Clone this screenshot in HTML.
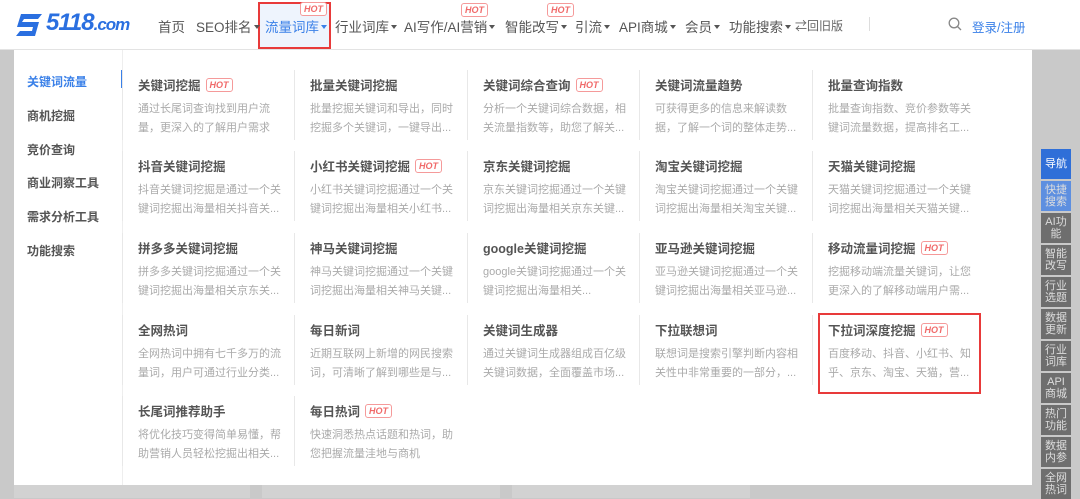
<!DOCTYPE html><html><head><meta charset="utf-8"><style>
*{margin:0;padding:0;box-sizing:border-box}
body{width:1080px;height:498px;overflow:hidden;background:#c9c9c9;font-family:"Liberation Sans","Noto Sans CJK SC",sans-serif;position:relative}
.hdr{position:absolute;left:0;top:0;width:1080px;height:50px;background:#fff;border-bottom:1px solid #e3e3e3}
.nav{position:absolute;top:16px;font-size:13.5px;color:#555;white-space:nowrap}
.nav span{position:absolute}
.nav span i{display:inline-block;width:0;height:0;border-left:3px solid transparent;border-right:3px solid transparent;border-top:4px solid currentColor;vertical-align:3px;margin-left:2px}
.hot{display:inline-block;border:1px solid #f59a9a;color:#f06a6a;font-size:9px;font-style:italic;font-weight:bold;padding:0 3px;line-height:12px;border-radius:3px;vertical-align:2px;margin-left:5px;background:#fff}
.panel{position:absolute;left:14px;top:50px;width:1018px;height:435px;background:#fff}
.ln{position:absolute;left:13px;font-size:12px;font-weight:bold;color:#555}
.it{position:absolute;width:172px;height:82px;padding-left:16px}
.it:before{content:"";position:absolute;left:0;top:-6px;height:70px;border-left:1px solid #e8e8e8}
.t{font-size:12.5px;font-weight:bold;color:#555;height:20px;line-height:20px;white-space:nowrap}
.d{font-size:11px;color:#aaa;line-height:19px;margin-top:4px;width:150px;height:38px;overflow:hidden}
.sb{position:absolute;left:1041px;width:30px;background:#6e6e6e;color:#ddd;font-size:11px;line-height:12px;text-align:center;display:flex;align-items:center;justify-content:center}
</style></head><body>
<div class="hdr">
<svg style="position:absolute;left:14px;top:13px" width="30" height="24" viewBox="0 0 30 24"><path d="M7 1h21l-4 5H10l-2 3h17l-4 14H2l4-5h12l1-4H3z" fill="#2a6fe0"/></svg>
<div style="position:absolute;left:46px;top:9px;font-size:24px;font-weight:bold;font-style:italic;color:#2a6fe0;letter-spacing:-1px">5118<span style="font-size:17px">.com</span></div>
<div style="position:absolute;left:258px;top:2px;width:73px;height:47px;background:#eef4fd;border:2px solid #e83a3a"></div>
<div class="nav">
<span style="left:158px">首页</span>
<span style="left:196px">SEO排名<i></i></span>
<span style="left:265px;color:#3a80e8">流量词库<i></i></span>
<span style="left:335px">行业词库<i></i></span>
<span style="left:404px">AI写作/AI营销<i></i></span>
<span style="left:505px">智能改写<i></i></span>
<span style="left:575px">引流<i></i></span>
<span style="left:619px">API商城<i></i></span>
<span style="left:685px">会员<i></i></span>
<span style="left:729px">功能搜索<i></i></span>
<span style="left:795px;font-size:12px;top:1px;color:#666">⇄回旧版</span>
<span style="left:972px;color:#3a80e8;font-size:12.5px;top:1px">登录/注册</span>
</div>
<span class="hot" style="position:absolute;left:300px;top:2px;margin:0">HOT</span>
<span class="hot" style="position:absolute;left:461px;top:3px;margin:0">HOT</span>
<span class="hot" style="position:absolute;left:547px;top:3px;margin:0">HOT</span>
<div style="position:absolute;left:869px;top:17px;width:1px;height:14px;background:#ddd"></div>
<svg style="position:absolute;left:948px;top:17px" width="14" height="14" viewBox="0 0 14 14"><circle cx="6" cy="6" r="4.8" fill="none" stroke="#888" stroke-width="1.3"/><path d="M9.5 9.5L13 13" stroke="#888" stroke-width="1.3"/></svg>
</div>
<div class="panel">
<div class="ln" style="top:23px;color:#3a80e8">关键词流量</div>
<div class="ln" style="top:57px">商机挖掘</div>
<div class="ln" style="top:91px">竞价查询</div>
<div class="ln" style="top:124px">商业洞察工具</div>
<div class="ln" style="top:158px">需求分析工具</div>
<div class="ln" style="top:192px">功能搜索</div>
<div style="position:absolute;left:107px;top:20px;width:2px;height:18px;background:#3a80e8"></div>
<div style="position:absolute;left:108px;top:0;height:435px;border-left:1px solid #eee"></div>

<div class="it" style="left:108px;top:26px"><div class="t">关键词挖掘<span class="hot">HOT</span></div><div class="d">通过长尾词查询找到用户流量，更深入的了解用户需求</div></div>
<div class="it" style="left:280px;top:26px"><div class="t">批量关键词挖掘</div><div class="d">批量挖掘关键词和导出，同时挖掘多个关键词，一键导出...</div></div>
<div class="it" style="left:453px;top:26px"><div class="t">关键词综合查询<span class="hot">HOT</span></div><div class="d">分析一个关键词综合数据，相关流量指数等，助您了解关...</div></div>
<div class="it" style="left:625px;top:26px"><div class="t">关键词流量趋势</div><div class="d">可获得更多的信息来解读数据，了解一个词的整体走势...</div></div>
<div class="it" style="left:798px;top:26px"><div class="t">批量查询指数</div><div class="d">批量查询指数、竞价参数等关键词流量数据，提高排名工...</div></div>

<div class="it" style="left:108px;top:107px"><div class="t">抖音关键词挖掘</div><div class="d">抖音关键词挖掘是通过一个关键词挖掘出海量相关抖音关...</div></div>
<div class="it" style="left:280px;top:107px"><div class="t">小红书关键词挖掘<span class="hot">HOT</span></div><div class="d">小红书关键词挖掘通过一个关键词挖掘出海量相关小红书...</div></div>
<div class="it" style="left:453px;top:107px"><div class="t">京东关键词挖掘</div><div class="d">京东关键词挖掘通过一个关键词挖掘出海量相关京东关键...</div></div>
<div class="it" style="left:625px;top:107px"><div class="t">淘宝关键词挖掘</div><div class="d">淘宝关键词挖掘通过一个关键词挖掘出海量相关淘宝关键...</div></div>
<div class="it" style="left:798px;top:107px"><div class="t">天猫关键词挖掘</div><div class="d">天猫关键词挖掘通过一个关键词挖掘出海量相关天猫关键...</div></div>

<div class="it" style="left:108px;top:189px"><div class="t">拼多多关键词挖掘</div><div class="d">拼多多关键词挖掘通过一个关键词挖掘出海量相关京东关...</div></div>
<div class="it" style="left:280px;top:189px"><div class="t">神马关键词挖掘</div><div class="d">神马关键词挖掘通过一个关键词挖掘出海量相关神马关键...</div></div>
<div class="it" style="left:453px;top:189px"><div class="t">google关键词挖掘</div><div class="d">google关键词挖掘通过一个关键词挖掘出海量相关...</div></div>
<div class="it" style="left:625px;top:189px"><div class="t">亚马逊关键词挖掘</div><div class="d">亚马逊关键词挖掘通过一个关键词挖掘出海量相关亚马逊...</div></div>
<div class="it" style="left:798px;top:189px"><div class="t">移动流量词挖掘<span class="hot">HOT</span></div><div class="d">挖掘移动端流量关键词，让您更深入的了解移动端用户需...</div></div>

<div class="it" style="left:108px;top:271px"><div class="t">全网热词</div><div class="d">全网热词中拥有七千多万的流量词，用户可通过行业分类...</div></div>
<div class="it" style="left:280px;top:271px"><div class="t">每日新词</div><div class="d">近期互联网上新增的网民搜索词，可清晰了解到哪些是与...</div></div>
<div class="it" style="left:453px;top:271px"><div class="t">关键词生成器</div><div class="d">通过关键词生成器组成百亿级关键词数据，全面覆盖市场...</div></div>
<div class="it" style="left:625px;top:271px"><div class="t">下拉联想词</div><div class="d">联想词是搜索引擎判断内容相关性中非常重要的一部分，...</div></div>
<div class="it" style="left:798px;top:271px"><div class="t">下拉词深度挖掘<span class="hot">HOT</span></div><div class="d">百度移动、抖音、小红书、知乎、京东、淘宝、天猫，营...</div></div>
<div style="position:absolute;left:804px;top:263px;width:163px;height:81px;border:2px solid #e83a3a"></div>

<div class="it" style="left:108px;top:352px"><div class="t">长尾词推荐助手</div><div class="d">将优化技巧变得简单易懂，帮助营销人员轻松挖掘出相关...</div></div>
<div class="it" style="left:280px;top:352px"><div class="t">每日热词<span class="hot">HOT</span></div><div class="d">快速洞悉热点话题和热词，助您把握流量洼地与商机</div></div>
</div>
<div style="position:absolute;left:14px;top:485px;width:236px;height:13px;background:#d2d2d2"></div>
<div style="position:absolute;left:262px;top:485px;width:238px;height:13px;background:#d2d2d2"></div>
<div style="position:absolute;left:512px;top:485px;width:238px;height:13px;background:#d2d2d2"></div>

<div class="sb" style="top:149px;height:30px;background:#2f6fd8;color:#fff">导航</div>
<div class="sb" style="top:181px;height:30px;background:#5d8fe0">快捷<br>搜索</div>
<div class="sb" style="top:213px;height:30px">AI功<br>能</div>
<div class="sb" style="top:245px;height:30px">智能<br>改写</div>
<div class="sb" style="top:277px;height:30px">行业<br>选题</div>
<div class="sb" style="top:309px;height:30px">数据<br>更新</div>
<div class="sb" style="top:341px;height:30px">行业<br>词库</div>
<div class="sb" style="top:373px;height:30px">API<br>商城</div>
<div class="sb" style="top:405px;height:30px">热门<br>功能</div>
<div class="sb" style="top:437px;height:30px">数据<br>内参</div>
<div class="sb" style="top:469px;height:30px">全网<br>热词</div>
</body></html>
